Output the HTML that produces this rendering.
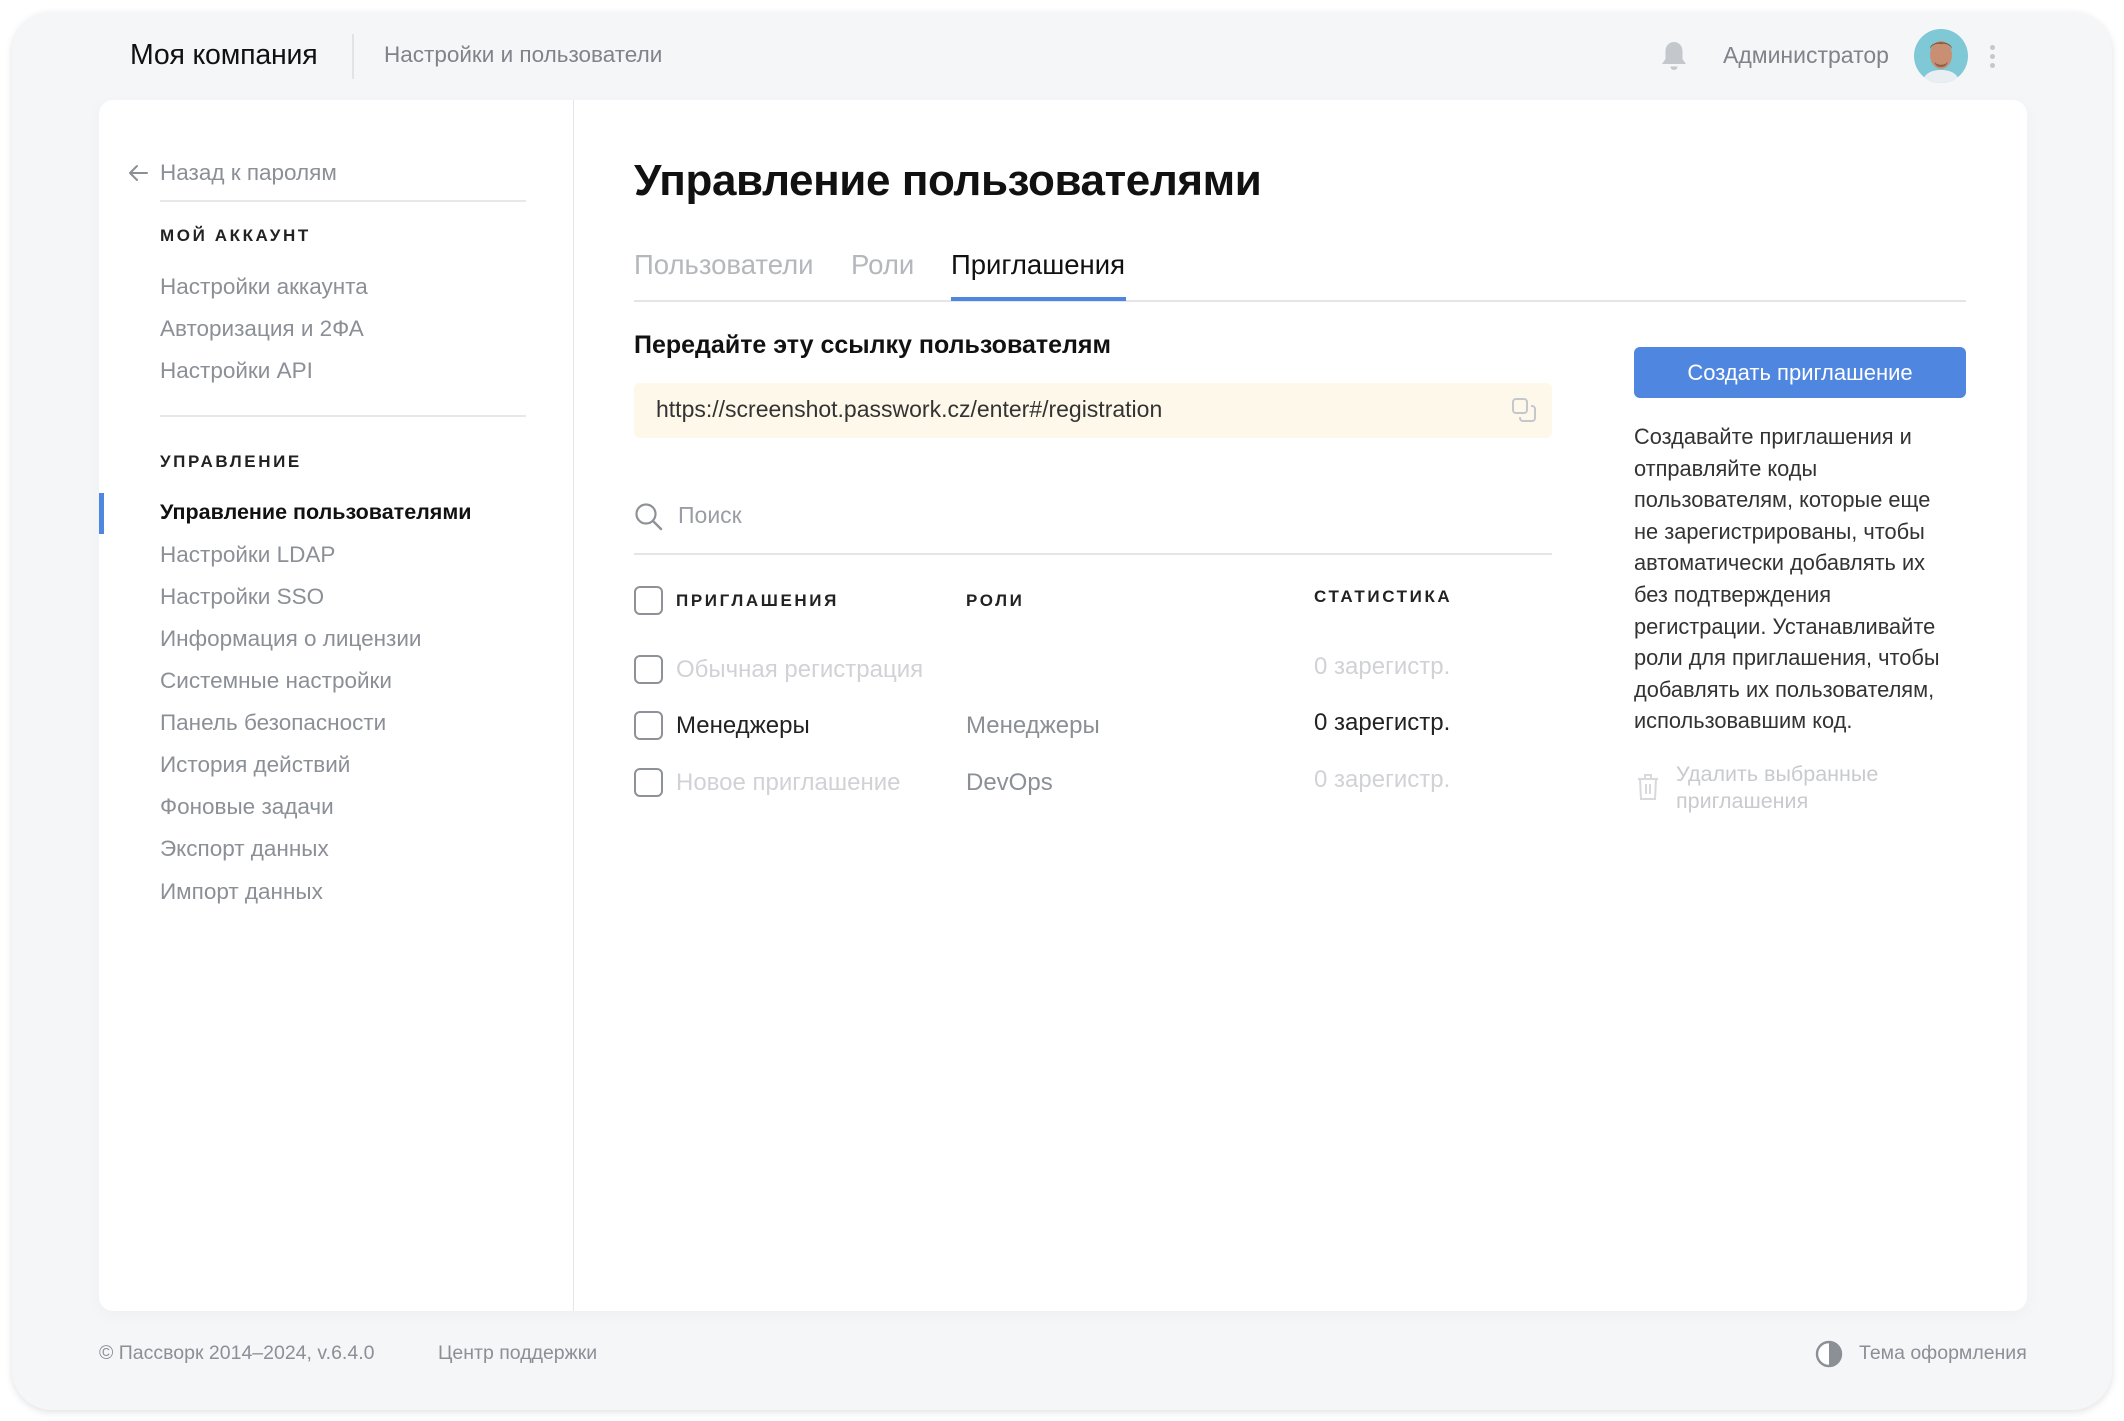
<!DOCTYPE html>
<html><head><meta charset="utf-8"><style>
*{margin:0;padding:0;box-sizing:border-box}
body{width:2124px;height:1421px;background:#fff;font-family:"Liberation Sans","DejaVu Sans",sans-serif;position:relative;overflow:hidden;color:#222}
.a{position:absolute;white-space:nowrap}
.frame{position:absolute;left:12px;top:12px;width:2100px;height:1398px;background:#f5f6f8;border-radius:40px;box-shadow:0 2px 8px rgba(0,0,0,.12)}
.card{position:absolute;left:99px;top:100px;width:1928px;height:1211px;background:#fff;border-radius:14px;box-shadow:0 4px 16px rgba(0,0,0,.03)}
.side{font-size:22.5px;color:#8b8f96}
.cap{font-size:17px;font-weight:bold;letter-spacing:2.6px;color:#222}
.cb{position:absolute;width:29px;height:29px;border:2px solid #8e9298;border-radius:6px;background:#fff}
.row{font-size:24px}
.desc{font-size:21.8px;color:#333;line-height:31.6px}
.ft{font-size:19.5px;color:#8b8f96}
</style></head><body>
<div class="frame"></div>
<div class="a" style="left:130px;top:39px;font-size:28.5px;color:#111;letter-spacing:-0.2px">Моя компания</div>
<div class="a" style="left:352px;top:34px;width:2px;height:45px;background:#e1e3e6"></div>
<div class="a" style="left:384px;top:42px;font-size:22.5px;color:#7f838a">Настройки и пользователи</div>
<svg class="a" style="left:1660px;top:40px" width="28" height="32" viewBox="0 0 28 32"><path d="M14 2c-5 0-8.5 4-8.5 9v8L2 24h24l-3.5-5v-8c0-5-3.5-9-8.5-9z" fill="#c4c7cc"/><path d="M10.5 26.5a3.5 3.5 0 0 0 7 0z" fill="#c4c7cc"/></svg>
<div class="a" style="left:1723px;top:42px;font-size:23px;color:#7f838a">Администратор</div>
<svg class="a" style="left:1914px;top:29px" width="54" height="54" viewBox="0 0 54 54"><defs><clipPath id="c"><ellipse cx="27" cy="27" rx="27" ry="27"/></clipPath></defs><g clip-path="url(#c)"><rect width="54" height="54" fill="#7fc8d6"/><ellipse cx="27" cy="26" rx="11" ry="14" fill="#c98f72"/><path d="M16 20c0-9 22-9 22 0c-2-4-6-6-11-5c-5-1-9 1-11 5z" fill="#7a5a3e"/><path d="M20 32c2 5 12 5 14 0c-1 4-3 6-7 6s-6-2-7-6z" fill="#8a6048"/><path d="M8 54c2-10 10-13 19-13s17 3 19 13z" fill="#e8eef2"/></g></svg>
<div class="a" style="left:1990px;top:45px;width:5px;height:5px;border-radius:50%;background:#c4c7cc;box-shadow:0 9px 0 #c4c7cc,0 18px 0 #c4c7cc"></div>

<div class="card"></div>
<div class="a" style="left:573px;top:100px;width:1px;height:1211px;background:#e3e5e8"></div>
<svg class="a" style="left:127px;top:163px" width="22" height="20" viewBox="0 0 22 20"><path d="M20 10H3M10 3L3 10l7 7" fill="none" stroke="#8b8f96" stroke-width="2" stroke-linecap="round" stroke-linejoin="round"/></svg>
<div class="a side" style="left:160px;top:160px">Назад к паролям</div>
<div class="a" style="left:160px;top:200px;width:366px;height:2px;background:#e6e8eb"></div>
<div class="a cap" style="left:160px;top:226px">МОЙ АККАУНТ</div>
<div class="a side" style="left:160px;top:274px">Настройки аккаунта</div>
<div class="a side" style="left:160px;top:316px">Авторизация и 2ФА</div>
<div class="a side" style="left:160px;top:358px">Настройки API</div>
<div class="a" style="left:160px;top:415px;width:366px;height:2px;background:#e6e8eb"></div>
<div class="a cap" style="left:160px;top:452px">УПРАВЛЕНИЕ</div>
<div class="a" style="left:99px;top:493px;width:5px;height:41px;background:#4f86e0"></div>
<div class="a side" style="left:160px;top:500px;color:#111;font-weight:bold;font-size:21.5px">Управление пользователями</div>
<div class="a side" style="left:160px;top:542px">Настройки LDAP</div>
<div class="a side" style="left:160px;top:584px">Настройки SSO</div>
<div class="a side" style="left:160px;top:626px">Информация о лицензии</div>
<div class="a side" style="left:160px;top:668px">Системные настройки</div>
<div class="a side" style="left:160px;top:710px">Панель безопасности</div>
<div class="a side" style="left:160px;top:752px">История действий</div>
<div class="a side" style="left:160px;top:794px">Фоновые задачи</div>
<div class="a side" style="left:160px;top:836px">Экспорт данных</div>
<div class="a side" style="left:160px;top:879px">Импорт данных</div>
<div class="a" style="left:634px;top:156px;font-size:44px;font-weight:bold;color:#111;letter-spacing:-0.4px">Управление пользователями</div>
<div class="a" style="left:634px;top:249px;font-size:27.5px;color:#b4b7bc">Пользователи</div>
<div class="a" style="left:851px;top:249px;font-size:27.5px;color:#b4b7bc">Роли</div>
<div class="a" style="left:951px;top:249px;font-size:27.5px;color:#111">Приглашения</div>
<div class="a" style="left:634px;top:300px;width:1332px;height:2px;background:#e3e5e8"></div>
<div class="a" style="left:951px;top:297px;width:175px;height:4px;background:#4f86e0"></div>
<div class="a" style="left:634px;top:331px;font-size:25px;font-weight:bold;color:#111">Передайте эту ссылку пользователям</div>
<div class="a" style="left:634px;top:383px;width:918px;height:55px;background:#fdf8ea;border-radius:6px"></div>
<div class="a" style="left:656px;top:396px;font-size:23px;color:#333">https://screenshot.passwork.cz/enter#/registration</div>
<svg class="a" style="left:1511px;top:397px" width="26" height="26" viewBox="0 0 26 26"><rect x="2" y="2" width="14" height="14" rx="3" fill="none" stroke="#c4c7cc" stroke-width="2"/><path d="M20 9h1a3 3 0 0 1 3 3v9a3 3 0 0 1-3 3h-9a3 3 0 0 1-3-3v-1" fill="none" stroke="#c4c7cc" stroke-width="2"/></svg>
<div class="a" style="left:1634px;top:347px;width:332px;height:51px;background:#4f86e0;border-radius:6px;color:#fff;font-size:22px;text-align:center;line-height:51px">Создать приглашение</div>
<div class="a desc" style="left:1634px;top:421px">Создавайте приглашения и<br>отправляйте коды<br>пользователям, которые еще<br>не зарегистрированы, чтобы<br>автоматически добавлять их<br>без подтверждения<br>регистрации. Устанавливайте<br>роли для приглашения, чтобы<br>добавлять их пользователям,<br>использовавшим код.</div>
<svg class="a" style="left:1636px;top:772px" width="24" height="30" viewBox="0 0 24 30"><path d="M2 7h20M9 7V3h6v4M4 7l1 20h14l1-20M10 12v10M14 12v10" fill="none" stroke="#d7d9dc" stroke-width="2"/></svg>
<div class="a" style="left:1676px;top:761px;font-size:21.5px;color:#c8cace;line-height:27px">Удалить выбранные<br>приглашения</div>
<svg class="a" style="left:634px;top:502px" width="30" height="30" viewBox="0 0 30 30"><circle cx="12" cy="12" r="9.5" fill="none" stroke="#8e9298" stroke-width="2.2"/><path d="M19 19l8 8" stroke="#8e9298" stroke-width="2.4" stroke-linecap="round"/></svg>
<div class="a" style="left:678px;top:502px;font-size:23px;color:#9a9ea4">Поиск</div>
<div class="a" style="left:634px;top:553px;width:918px;height:2px;background:#e3e5e8"></div>
<div class="cb" style="left:634px;top:586px"></div>
<div class="a cap" style="left:676px;top:591px">ПРИГЛАШЕНИЯ</div>
<div class="a cap" style="left:966px;top:591px">РОЛИ</div>
<div class="a cap" style="left:1314px;top:587px">СТАТИСТИКА</div>
<div class="cb" style="left:634px;top:655px"></div>
<div class="a row" style="left:676px;top:656px;color:#d0d2d6">Обычная регистрация</div>
<div class="a row" style="left:1314px;top:653px;color:#d0d2d6">0 зарегистр.</div>
<div class="cb" style="left:634px;top:711px"></div>
<div class="a row" style="left:676px;top:712px;color:#222">Менеджеры</div>
<div class="a row" style="left:966px;top:712px;color:#8b8f96">Менеджеры</div>
<div class="a row" style="left:1314px;top:709px;color:#222">0 зарегистр.</div>
<div class="cb" style="left:634px;top:768px"></div>
<div class="a row" style="left:676px;top:769px;color:#d0d2d6">Новое приглашение</div>
<div class="a row" style="left:966px;top:769px;color:#8b8f96">DevOps</div>
<div class="a row" style="left:1314px;top:766px;color:#d0d2d6">0 зарегистр.</div>
<div class="a ft" style="left:99px;top:1342px">© Пассворк 2014–2024, v.6.4.0</div>
<div class="a ft" style="left:438px;top:1342px">Центр поддержки</div>
<svg class="a" style="left:1815px;top:1340px" width="28" height="28" viewBox="0 0 28 28"><circle cx="14" cy="14" r="12" fill="#fff" stroke="#8b8f96" stroke-width="2.4"/><path d="M14 2a12 12 0 0 1 0 24z" fill="#8b8f96"/></svg>
<div class="a ft" style="left:1859px;top:1342px">Тема оформления</div>
</body></html>
